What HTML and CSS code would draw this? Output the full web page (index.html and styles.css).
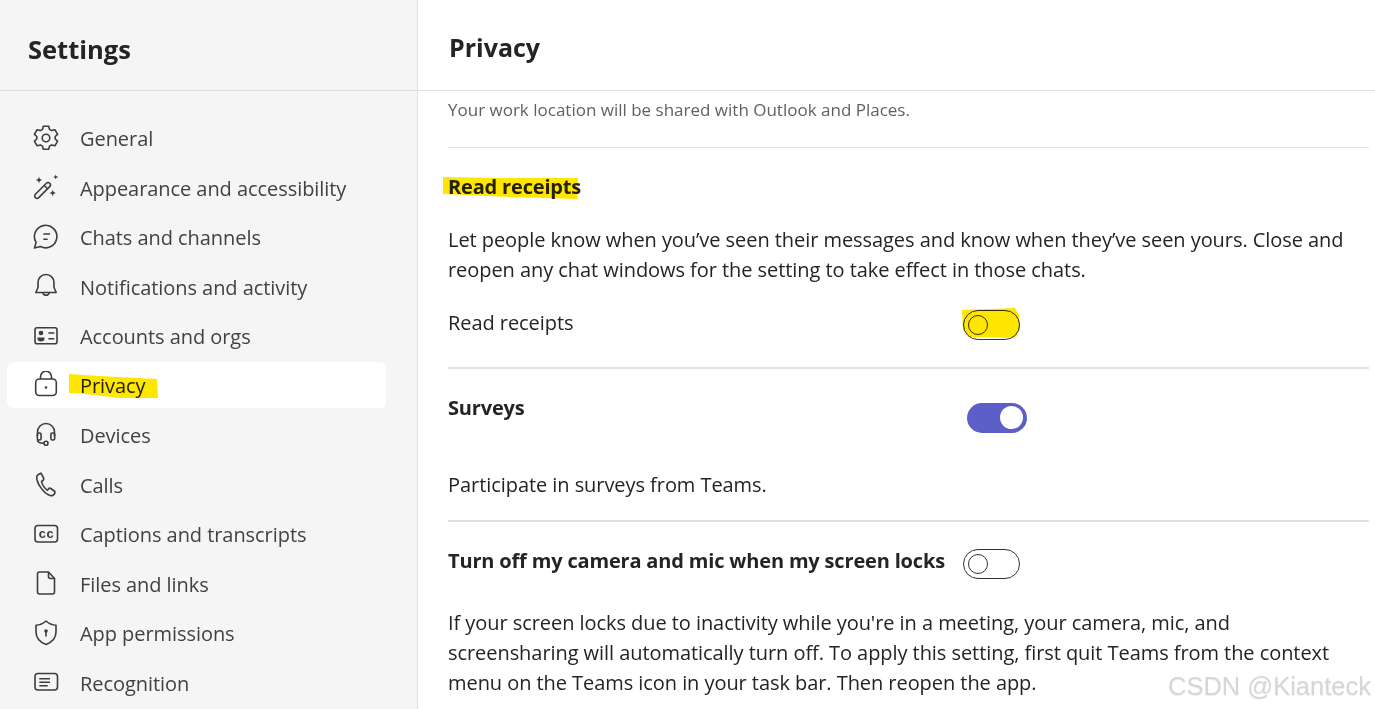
FILE: index.html
```html
<!doctype html>
<html>
<head>
<meta charset="utf-8">
<title>Settings</title>
<link rel="stylesheet" href="styles.css">
</head>
<body>
	<div class="app">
		<div class="side">
			<div class="side-head">Settings</div>
			<ul class="nav">
				<li>
					<svg class="ico" viewBox="0 0 28 28"><path d="M11.300 1.200h5.400l.8 3.200 2.200 1.200 3.200-.9 2.700 4.600-2.400 2.200v2.500l2.400 2.200-2.700 4.600-3.200-.9-2.200 1.200-.8 3.200h-5.400l-.8-3.200-2.200-1.200-3.200.9-2.700-4.600 2.400-2.200v-2.500L2.400 9.300l2.700-4.600 3.200.9 2.200-1.200z" stroke-linejoin="round"/><circle cx="14" cy="13" r="3.800"/></svg>
					<span>General</span>
				</li>
				<li>
					<svg class="ico" viewBox="0 0 28 28"><path d="M3.400 20.300 14.400 9.300a2.300 2.300 0 0 1 3.300 3.300L6.700 23.600a2.300 2.300 0 0 1-3.300-3.300z"/><path d="M12.200 11.500l3.300 3.300"/><path class="solid" d="M7 2.800l.9 2.300 2.300.9-2.300.9L7 9.200l-.9-2.300L3.800 6l2.300-.9zM23.700 .4l.7 1.900 1.900.7-1.900.7-.7 1.900-.7-1.900-1.900-.7 1.900-.7zM20.700 15.800l.9 2.300 2.300.9-2.300.9-.9 2.300-.9-2.300-2.300-.9 2.300-.9z"/></svg>
					<span>Appearance and accessibility</span>
				</li>
				<li>
					<svg class="ico" viewBox="0 0 28 28"><path d="M2.500 24l1.600-5.600A11.200 11.200 0 1 1 8.500 22.500z" stroke-linejoin="round"/><path d="M11.300 10h6.700M11.300 15.300h4.400"/></svg>
					<span>Chats and channels</span>
				</li>
				<li>
					<svg class="ico" viewBox="0 0 28 28"><path d="M14 1.500c-4.600 0-8 3.600-8 8v5l-2.200 5h20.400l-2.200-5v-5c0-4.400-3.400-8-8-8z" stroke-linejoin="round"/><path d="M10.800 19.700a3.300 3.300 0 0 0 6.400 0"/></svg>
					<span>Notifications and activity</span>
				</li>
				<li>
					<svg class="ico" viewBox="0 0 28 28"><rect x="3" y="4.700" width="22" height="16" rx="2"/><circle class="solid" cx="9" cy="10" r="2.300"/><path class="solid" d="M5.500 14.500h7v1.500c0 1.500-1.500 2.500-3.500 2.500s-3.500-1-3.500-2.500z"/><path d="M16.300 10h6M16.300 15.700h6"/></svg>
					<span>Accounts and orgs</span>
				</li>
				<li class="on">
					<svg class="ico" viewBox="0 0 28 28"><rect x="3.700" y="8" width="20.600" height="16.500" rx="3.500"/><path d="M8.500 8V5.800a5.500 5.500 0 0 1 11 0V8"/><circle class="solid" cx="14" cy="16.500" r="1.300"/></svg>
					<span>Privacy</span>
				</li>
				<li>
					<svg class="ico" viewBox="0 0 28 28"><path d="M5.500 14V10a8.500 8.500 0 0 1 17 0v4"/><rect x="5.300" y="11" width="3.800" height="7" rx="1.500"/><rect x="18.900" y="11" width="3.800" height="7" rx="1.500"/><path d="M5.500 18c0 2 1.800 3.300 6.500 3.300"/><circle cx="14" cy="21.300" r="2"/></svg>
					<span>Devices</span>
				</li>
				<li>
					<svg class="ico" viewBox="0 0 28 28"><path d="M9 2.200L6.800 3.200C4.800 4.300 4.400 6.500 5 9c1.200 5 7 13.500 13 15.500 2 .5 4.500-.5 5-2.700l-.2-1.300-4-3c-.8-.5-1.800-.3-2.300.5l-1 1.200c-2.500-1.200-5.700-6.200-6-8.700l1.500-1c.8-.7 1-1.500.6-2.500z" stroke-linejoin="round"/></svg>
					<span>Calls</span>
				</li>
				<li>
					<svg class="ico" viewBox="0 0 28 28"><rect x="3" y="4.500" width="22.500" height="16.500" rx="3"/><text class="cc" x="14.200" y="17">cc</text></svg>
					<span>Captions and transcripts</span>
				</li>
				<li>
					<svg class="ico" viewBox="0 0 28 28"><path d="M7.500 2h9l6 6.500V22a2 2 0 0 1-2 2H7.500a2 2 0 0 1-2-2V4a2 2 0 0 1 2-2z" stroke-linejoin="round"/><path d="M16.500 2v4.500a2 2 0 0 0 2 2h4"/></svg>
					<span>Files and links</span>
				</li>
				<li>
					<svg class="ico" viewBox="0 0 28 28"><path d="M14 1c-3 2.800-6 4-10 4.200V12c0 6 3.500 10 10 12.500C20.500 22 24 18 24 12V5.200C20 5 17 3.800 14 1z" stroke-linejoin="round"/><circle class="solid" cx="14" cy="11" r="1.800"/><path d="M14 12v4.500"/></svg>
					<span>App permissions</span>
				</li>
				<li>
					<svg class="ico" viewBox="0 0 28 28"><rect x="3" y="4.500" width="22.500" height="16.500" rx="3"/><path d="M7.300 9.800h10.700M7.300 13.300h10.700M7.300 16.800h8.400"/></svg>
					<span>Recognition</span>
				</li>
			</ul>
		</div>
		<div class="main">
			<div class="main-head">Privacy</div>
			<div class="main-body">
				<p class="intro">Your work location will be shared with Outlook and Places.</p>

				<div class="sec">
					<h3 class="sec-title">Read receipts</h3>
					<p class="txt first">Let people know when you’ve seen their messages and know when they’ve seen yours. Close and reopen any chat windows for the setting to take effect in those chats.</p>
					<div class="row row-read">
						<span>Read receipts</span>
						<div class="tog"><i></i></div>
					</div>
				</div>

				<div class="sec">
					<div class="row row-survey">
						<h3 class="sec-title">Surveys</h3>
						<div class="tog tog-on"><i></i></div>
					</div>
					<p class="txt survey-txt">Participate in surveys from Teams.</p>
				</div>

				<div class="sec last">
					<div class="row row-cam">
						<h3 class="sec-title">Turn off my camera and mic when my screen locks</h3>
						<div class="tog"><i></i></div>
					</div>
					<p class="txt cam-txt">If your screen locks due to inactivity while you're in a meeting, your camera, mic, and screensharing will automatically turn off. To apply this setting, first quit Teams from the context menu on the Teams icon in your task bar. Then reopen the app.</p>
				</div>
			</div>
		</div>
	</div>

	<svg class="marks" viewBox="0 0 1375 709">
		<path d="M69 374l31 2 57 3 1 19h-38l-44-5h-7z"/>
		<path d="M443 177l57 1 78 0-1 21-67-2-67-3z"/>
		<path d="M962 310l53-2 4 7 1 15-6 8-44-1-7-7z"/>
	</svg>
	<div class="mark-wm">CSDN @Kianteck</div>
</body>
</html>
```

FILE: styles.css
```css
*{
	margin: 0;
	padding: 0;
	list-style: none;
	box-sizing: border-box;
}
html,body{
	height: 100%;
	overflow: hidden;
}
body{
	background: #fff;
	font-family: "Open Sans", "Noto Sans", sans-serif;
	color: #242424;
}
.app{
	display: flex;
	height: 709px;
}

.side{
	width: 418px;
	background: #f5f5f5;
	border-right: 1px solid #e0e0e0;
	flex-shrink: 0;
}
.side-head{
	height: 91px;
	padding: 29px 0 0 28px;
	font-size: 25.500px;
	line-height: 40px;
	font-weight: 700;
	border-bottom: 1px solid #e0e0e0;
}
.nav{
	padding: 23px 31px 0 7px;
}
.nav li{
	height: 49.5px;
	display: flex;
	align-items: center;
	padding-left: 25px;
	font-size: 20px;
	letter-spacing: -0.060px;
	color: #424242;
}
.nav li.on{
	background: #fff;
	border-radius: 6px;
	color: #242424;
	height: 46px;
	margin: 0.500px 0 3px;
}
.ico{
	width: 28px;
	height: 28px;
	margin-right: 20px;
	fill: none;
	stroke: #3d3d3d;
	stroke-width: 1.600;
	flex-shrink: 0;
}
.ico .solid{
	fill: #3d3d3d;
	stroke: none;
}
.ico .cc{
	font-family: "Liberation Mono", monospace;
	font-size: 13px;
	font-weight: 700;
	text-anchor: middle;
	fill: #3d3d3d;
	stroke: none;
}

.main{
	flex: 1;
	min-width: 0;
}
.main-head{
	height: 91px;
	padding: 27px 0 0 31px;
	font-size: 25px;
	line-height: 40px;
	font-weight: 700;
	border-bottom: 1px solid #e0e0e0;
}
.main-body{
	padding: 4px 6px 0 30px;
	font-size: 20px;
	letter-spacing: -0.060px;
	line-height: 30px;
}
.intro{
	font-size: 17px;
	letter-spacing: 0;
	color: #616161;
	padding-bottom: 22px;
	border-bottom: 1px solid #e0e0e0;
}
.sec{
	border-bottom: 2px solid #e0e0e0;
	padding-bottom: 20px;
}
.sec.last{
	border-bottom: 0;
}
.sec-title{
	font-size: 20px;
	font-weight: 700;
	letter-spacing: -0.170px;
}
.sec > .sec-title{
	padding-top: 24px;
}
.row{
	display: grid;
	grid-template-columns: 515px 57px;
	align-items: start;
}
.txt.first{
	margin-top: 23px;
}
.row-read{
	margin-top: 23px;
	padding-bottom: 7px;
}
.row-read .tog{
	margin-top: 2px;
}
.row-survey{
	padding-top: 24px;
	grid-template-columns: 519px 60px;
}
.row-survey .tog{
	margin-top: 10px;
}
.survey-txt{
	margin-top: 37px;
}
.row-cam{
	padding-top: 24px;
}
.row-cam .tog{
	margin-top: 3px;
}
.cam-txt{
	margin-top: 29px;
	max-width: 900px;
}

.tog{
	height: 30px;
	border: 1px solid #333;
	border-radius: 15px;
	position: relative;
}
.tog i{
	position: absolute;
	left: 4px;
	top: 4px;
	width: 20px;
	height: 20px;
	border: 1px solid #333;
	border-radius: 50%;
}
.tog-on{
	background: #5b5fc7;
	border: 0;
}
.tog-on i{
	left: 33px;
	top: 3px;
	width: 23px;
	height: 23px;
	background: #fff;
	border: 0;
}

/* marker strokes and watermark sit on top of the shot */
.marks{
	position: absolute;
	left: 0;
	top: 0;
	width: 1375px;
	height: 709px;
	fill: #ffe600;
	mix-blend-mode: multiply;
	pointer-events: none;
}
.mark-wm{
	position: absolute;
	right: 4px;
	top: 671px;
	font-family: "Liberation Sans", sans-serif;
	font-size: 25.500px;
	line-height: 30px;
	color: #d6d6d6;
	text-shadow: 0 1px 1px #eee;
}
```
